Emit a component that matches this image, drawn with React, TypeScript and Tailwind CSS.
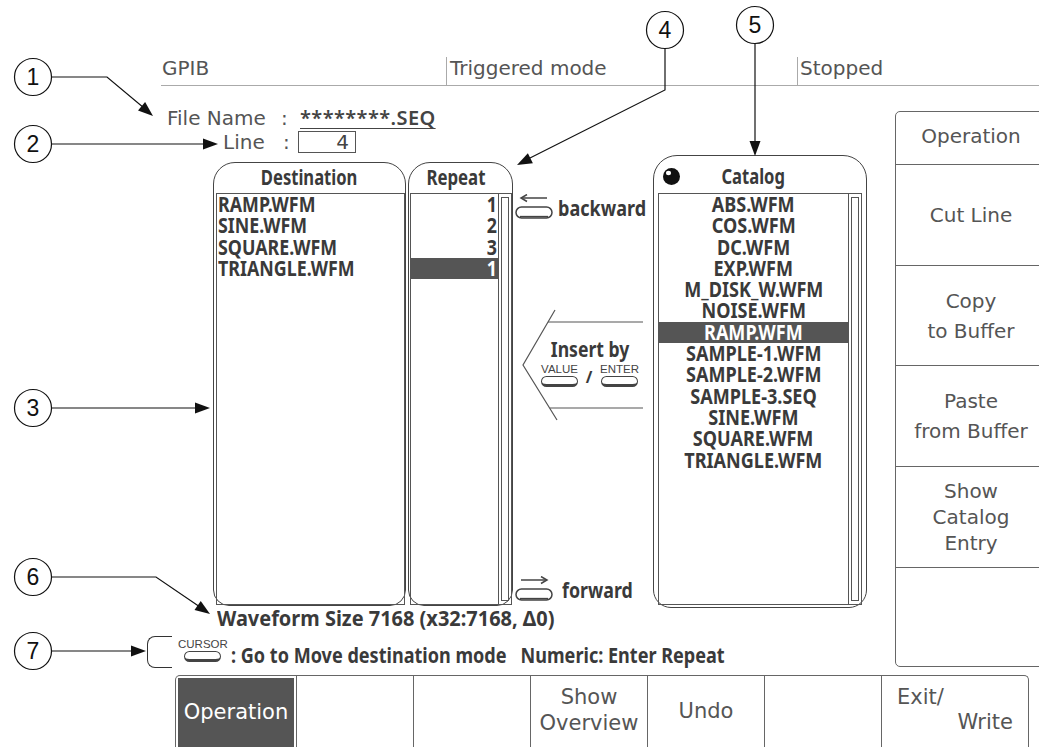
import React from "react";

const SANS = "font-['DejaVu_Sans',sans-serif]";
const NAR = "font-['Noto_Sans',sans-serif] font-bold";

function head(x1: number, y1: number, x2: number, y2: number, len = 15, w = 5.5) {
  const dx = x2 - x1;
  const dy = y2 - y1;
  const L = Math.hypot(dx, dy);
  const ux = dx / L;
  const uy = dy / L;
  const bx = x2 - ux * len;
  const by = y2 - uy * len;
  return `${x2},${y2} ${bx - uy * w},${by + ux * w} ${bx + uy * w},${by - ux * w}`;
}

function Callouts() {
  const circles: [number, number, string][] = [
    [33, 77, "1"],
    [33, 144, "2"],
    [33, 408, "3"],
    [665, 30, "4"],
    [755, 25, "5"],
    [33, 577, "6"],
    [33, 651, "7"],
  ];
  const lines: { d: string; h: [number, number, number, number] }[] = [
    { d: "M52 77 H107 L150 113", h: [107, 77, 153, 116] },
    { d: "M52 144 H206", h: [52, 144, 218, 144] },
    { d: "M52 408 H198", h: [52, 408, 210, 408] },
    { d: "M665 49 V90 L528 159", h: [665, 90, 517, 165] },
    { d: "M755 44 V145", h: [755, 44, 755, 156] },
    { d: "M52 577 H156 L200 607", h: [156, 577, 210, 614] },
    { d: "M52 651 H134", h: [52, 651, 146, 651] },
  ];
  return (
    <svg className="absolute inset-0 pointer-events-none" width="1039" height="747" viewBox="0 0 1039 747">
      {lines.map((l, i) => (
        <g key={i}>
          <path d={l.d} fill="none" stroke="#111" strokeWidth="1.2" />
          <polygon points={head(...l.h)} fill="#111" />
        </g>
      ))}
      {circles.map(([cx, cy, t]) => (
        <g key={t}>
          <circle cx={cx} cy={cy} r="18.5" fill="white" stroke="#111" strokeWidth="1.2" />
          <text
            x={cx}
            y={cy + 8}
            textAnchor="middle"
            fontFamily="Liberation Sans, Arial, sans-serif"
            fontSize="23"
            fill="#111"
          >
            {t}
          </text>
        </g>
      ))}
    </svg>
  );
}

function Key({ label }: { label: string }) {
  return (
    <div className="flex flex-col items-center">
      <span className="text-[11.5px] leading-[10px] font-['Liberation_Sans',sans-serif] text-[#444]">
        {label}
      </span>
      <div className="mt-[2px] w-[37px] h-[11px] rounded-[6px] border-[1.5px] border-b-[3px] border-[#444]" />
    </div>
  );
}

function DirIcon({ dir }: { dir: "left" | "right" }) {
  return (
    <svg className="shrink-0" width="38" height="26" viewBox="0 0 38 26">
      <path d="M6 4 H32" stroke="#444" strokeWidth="1.5" />
      {dir === "left" ? (
        <path d="M12 0.5 L6 4 L12 7.5" fill="none" stroke="#444" strokeWidth="1.5" />
      ) : (
        <path d="M26 0.5 L32 4 L26 7.5" fill="none" stroke="#444" strokeWidth="1.5" />
      )}
      <rect x="1" y="13" width="36" height="11" rx="5.5" fill="none" stroke="#444" strokeWidth="1.5" />
      <path d="M5 22.6 H33" stroke="#444" strokeWidth="1.5" />
    </svg>
  );
}

function Scrollbar() {
  return (
    <div className="w-[13px] border-l border-[#555] flex flex-col px-[2px] pt-[3px] pb-[3px]">
      <div className="flex-1 border border-[#555]" />
    </div>
  );
}

const catalog = [
  "ABS.WFM",
  "COS.WFM",
  "DC.WFM",
  "EXP.WFM",
  "M_DISK_W.WFM",
  "NOISE.WFM",
  "RAMP.WFM",
  "SAMPLE-1.WFM",
  "SAMPLE-2.WFM",
  "SAMPLE-3.SEQ",
  "SINE.WFM",
  "SQUARE.WFM",
  "TRIANGLE.WFM",
];

const dest = [
  ["RAMP.WFM", "1"],
  ["SINE.WFM", "2"],
  ["SQUARE.WFM", "3"],
  ["TRIANGLE.WFM", "1"],
];

export default function App() {
  return (
    <div className="relative w-[1039px] h-[747px] overflow-hidden bg-white text-[#3a3a3a]">
      {/* status bar */}
      <div className={`ml-[161px] mt-[57px] h-[29px] flex border-b border-[#aaa] text-[20px] leading-[22px] text-[#555] ${SANS}`}>
        <div className="w-[285px] pl-[1px]">GPIB</div>
        <div className="w-[351px] border-l border-[#aaa] pl-[3px]">Triggered mode</div>
        <div className="flex-1 border-l border-[#aaa] pl-[2px]">Stopped</div>
      </div>

      <div className="flex h-[589px]">
        {/* left area */}
        <div className="w-[895px] shrink-0 flex flex-col">
          <div className={`mt-[20px] h-[24px] flex items-center pl-[167px] text-[20px] text-[#555] ${SANS}`}>
            <span className="w-[114px]">File Name</span>
            <span className="w-[19px]">:</span>
            <span className={`${NAR} font-semibold text-[20px] text-[#444] underline underline-offset-[3px] decoration-1 tracking-[0.4px]`}>
              ********.SEQ
            </span>
          </div>
          <div className={`mt-[1px] h-[22px] flex items-center pl-[223px] text-[20px] text-[#555] ${SANS}`}>
            <span className="w-[60px]">Line</span>
            <span className="w-[15px]">:</span>
            <div className="w-[58px] h-[22px] border border-[#555] flex items-center justify-end pr-[6px] leading-[20px] text-[#444]">
              4
            </div>
          </div>

          {/* panels */}
          <div className="h-[455px] flex items-start pl-[213px]">
            {/* Destination */}
            <div className="mt-[9px] w-[193px] h-[444px] flex flex-col border border-[#444] rounded-t-[22px] rounded-b-[16px]">
              <div className={`h-[30px] flex items-center justify-center text-[21px] ${NAR}`}>
                <span className="inline-block scale-x-[0.79]">Destination</span>
              </div>
              <div className={`flex-1 ml-[2px] border border-[#555] text-[21px] leading-[21.3px] ${NAR}`}>
                {dest.map(([n]) => (
                  <div key={n} className="pl-[1px]">
                    <span className="inline-block origin-left scale-x-[0.85]">{n}</span>
                  </div>
                ))}
              </div>
            </div>
            {/* Repeat */}
            <div className="ml-[2px] mt-[9px] w-[105px] h-[444px] flex flex-col border border-[#444] rounded-t-[22px] rounded-b-[16px]">
              <div className={`h-[30px] flex items-center justify-center pr-[10px] text-[21px] ${NAR}`}>
                <span className="inline-block scale-x-[0.8]">Repeat</span>
              </div>
              <div className="flex-1 ml-[1px] border border-[#555] flex">
                <div className={`flex-1 text-[21px] leading-[21.3px] text-right ${NAR}`}>
                  {dest.map(([n, r], i) => (
                    <div key={n} className={i === 3 ? "bg-[#555] text-white pr-[1px]" : "pr-[1px]"}>
                      <span className="inline-block origin-right scale-x-[0.85]">{r}</span>
                    </div>
                  ))}
                </div>
                <Scrollbar />
              </div>
            </div>

            {/* middle column */}
            <div className="w-[140px] h-[455px] flex flex-col">
              <div className="mt-[41px] h-[26px] flex items-center pl-[2px]">
                <DirIcon dir="left" />
                <span className={`ml-[5px] shrink-0 inline-block origin-left scale-x-[0.82] text-[22px] ${NAR}`}>backward</span>
              </div>
              <div className="relative mt-[88px] ml-[7px] w-[125px] h-[114px]">
                <svg className="absolute inset-0" width="125" height="114" viewBox="0 0 125 114">
                  <path d="M35 2 L3 57 L37 112" fill="none" stroke="#555" strokeWidth="1.2" />
                  <path d="M28 14 H123" stroke="#555" strokeWidth="1.2" />
                  <path d="M30 100 H123" stroke="#555" strokeWidth="1.2" />
                </svg>
                <div className="relative flex flex-col items-center pl-[15px] pt-[29px]">
                  <div className={`h-[22px] leading-[22px] text-[22px] ${NAR}`}>
                    <span className="inline-block scale-x-[0.8]">Insert by</span>
                  </div>
                  <div className="mt-[5px] flex items-start gap-[2px]">
                    <Key label="VALUE" />
                    <span className={`mt-[5px] w-[18px] text-center text-[16px] leading-[16px] ${NAR}`}>/</span>
                    <Key label="ENTER" />
                  </div>
                </div>
              </div>
              <div className="mt-[154px] h-[26px] flex items-center pl-[2px]">
                <DirIcon dir="right" />
                <span className={`ml-[9px] shrink-0 inline-block origin-left scale-x-[0.81] text-[22px] ${NAR}`}>forward</span>
              </div>
            </div>

            {/* Catalog */}
            <div className="mt-[2px] w-[214px] h-[453px] flex flex-col border border-[#444] rounded-t-[24px] rounded-b-[18px]">
              <div className="h-[37px] flex items-center pt-[4px]">
                <svg className="ml-[8px] shrink-0" width="19" height="19" viewBox="0 0 19 19">
                  <circle cx="9.5" cy="9.5" r="8.5" fill="#111" />
                  <ellipse cx="6.5" cy="6" rx="2.6" ry="2.2" fill="white" />
                </svg>
                <div className={`flex-1 text-center mr-[40px] text-[21px] ${NAR}`}>
                  <span className="inline-block scale-x-[0.79]">Catalog</span>
                </div>
              </div>
              <div className="flex-1 mx-[4px] mb-[2px] border border-[#555] flex">
                <div className={`flex-1 text-[21px] leading-[21.3px] text-center ${NAR}`}>
                  {catalog.map((c) => (
                    <div key={c} className={c === "RAMP.WFM" ? "bg-[#555] text-white" : ""}>
                      <span className="inline-block scale-x-[0.86]">{c}</span>
                    </div>
                  ))}
                </div>
                <Scrollbar />
              </div>
            </div>
          </div>

          {/* waveform size */}
          <div className={`h-[20px] pl-[217px] text-[21px] leading-[20px] ${NAR}`}>
            <span className="inline-block origin-left scale-x-[0.95] whitespace-pre">Waveform Size 7168 (x32:7168, Δ0)</span>
          </div>

          {/* cursor line */}
          <div className="mt-[8px] h-[32px] flex items-start pl-[147px]">
            <div className="w-[25px] h-[32px] shrink-0 border-l border-t border-b border-[#333] rounded-l-[8px]" />
            <div className="ml-[6px] mt-[3px] shrink-0">
              <Key label="CURSOR" />
            </div>
            <span className={`ml-[3px] mt-[8px] shrink-0 inline-block origin-left scale-x-[0.86] leading-[22px] text-[21px] whitespace-pre ${NAR}`}>
              {": Go to Move destination mode   Numeric: Enter Repeat"}
            </span>
          </div>
        </div>

        {/* right menu */}
        <div className={`mt-[25px] w-[152px] h-[556px] shrink-0 flex flex-col border border-[#666] rounded-l-[5px] text-[20px] text-[#555] text-center ${SANS}`}>
          <div className="h-[53px] border-b border-[#666] flex items-center justify-center pb-[4px]">Operation</div>
          <div className="h-[101px] border-b border-[#666] flex items-center justify-center">Cut Line</div>
          <div className="h-[100px] border-b border-[#666] flex flex-col items-center justify-center leading-[30px]">
            <span>Copy</span>
            <span>to Buffer</span>
          </div>
          <div className="h-[101px] border-b border-[#666] flex flex-col items-center justify-center leading-[30px]">
            <span>Paste</span>
            <span>from Buffer</span>
          </div>
          <div className="h-[101px] border-b border-[#666] flex flex-col items-center justify-center leading-[26px]">
            <span>Show</span>
            <span>Catalog</span>
            <span>Entry</span>
          </div>
          <div className="flex-1" />
        </div>
      </div>

      {/* bottom softkeys */}
      <div className={`ml-[175px] w-[854px] h-[80px] flex border-t border-l border-r border-[#666] rounded-t-[5px] text-[21px] text-[#555] ${SANS}`}>
        <div className="flex-1 p-[2px] pb-0">
          <div className="h-full bg-[#555] text-white flex items-start justify-center pt-[21px] leading-[26px]">
            Operation
          </div>
        </div>
        <div className="flex-1 border-l border-[#666]" />
        <div className="flex-1 border-l border-[#666]" />
        <div className="flex-1 border-l border-[#666] flex flex-col items-center pt-[8px] leading-[26px]">
          <span>Show</span>
          <span>Overview</span>
        </div>
        <div className="flex-1 border-l border-[#666] flex justify-center pt-[22px] leading-[26px]">Undo</div>
        <div className="flex-1 border-l border-[#666]" />
        <div className="flex-1 border-l border-[#666] flex flex-col pt-[9px] px-[15px] leading-[25px]">
          <span className="text-left">Exit/</span>
          <span className="text-right">Write</span>
        </div>
      </div>

      <Callouts />
    </div>
  );
}
